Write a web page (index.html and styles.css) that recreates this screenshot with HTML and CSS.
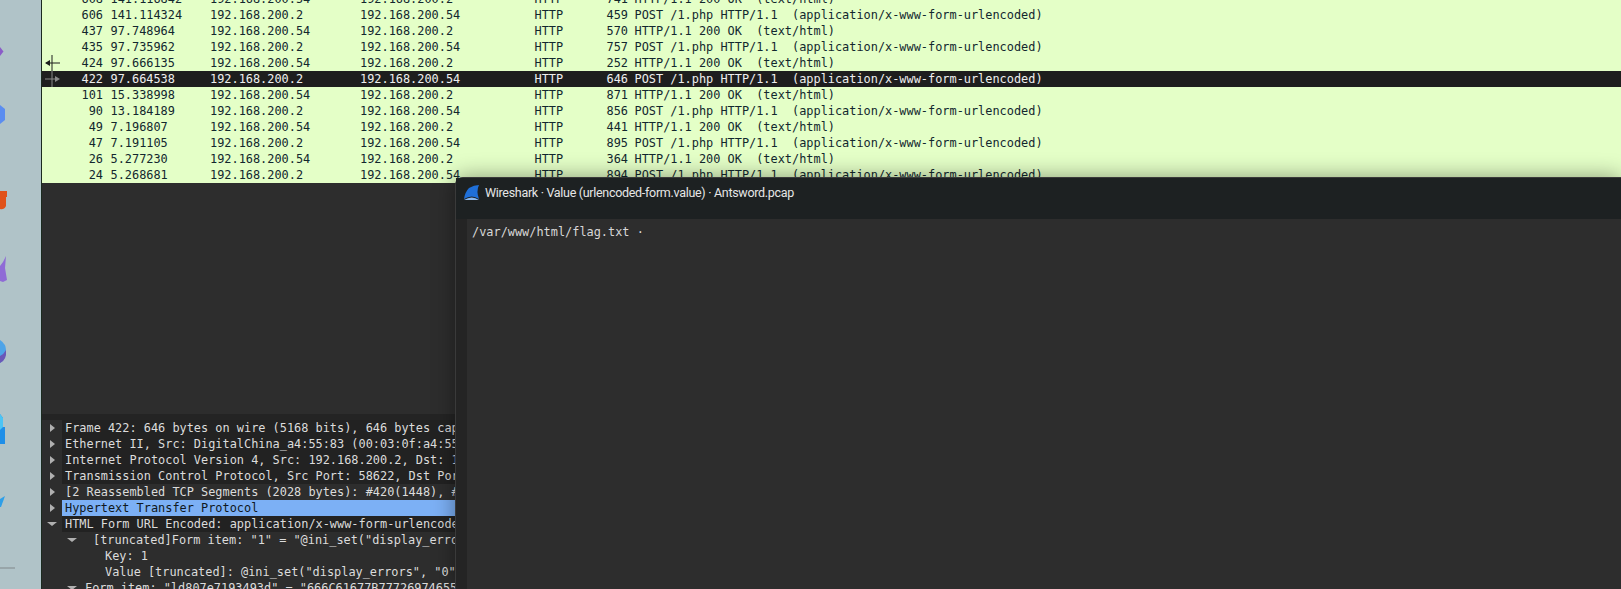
FILE: index.html
```html
<!DOCTYPE html>
<html lang="en">
<head>
<meta charset="utf-8">
<title>Wireshark</title>
<link rel="stylesheet" href="styles.css">
</head>
<body>
<div class="desktop">
  <aside class="dock">
    <svg class="dock-icons" width="41" height="589" viewBox="0 0 41 589">
      <path d="M0 47 L3.5 51.5 L0 56 Z" fill="#8a5cc8"/>
      <path d="M0 105 L5 109 L5 120 L0 124 Z" fill="#5b8df0"/>
      <path d="M0 191 H7 V197 H6 V206 Q4 210 0 209 Z" fill="#e0521a"/>
      <path d="M0 266 L3 262 L6 256 L5 268 L7 280 L3 282 L0 281 Z" fill="#8f6bd6"/>
      <path d="M0 340 Q6 344 6 350 Q6 360 0 363 Z" fill="#4ea4e8"/>
      <path d="M0 356 Q4 354 6 350 Q7 360 0 363 Z" fill="#6a58b8"/>
      <path d="M0 414 L3 418 V427 H5 V444 H0 Z" fill="#1f8fe8"/>
      <path d="M0 414 L3 418 V427 L0 430 Z" fill="#4cc4f4"/>
      <path d="M0 499 L5 496 L1 507 L0 507 Z" fill="#2f9fe8"/>
      <rect x="0" y="567" width="15" height="2" fill="#98a5a9"/>
    </svg>
  </aside>
  <main class="app">
    <section class="packets">
      <div class="row"><span class="c-no">608</span><span class="c-time">141.116842</span><span class="c-src">192.168.200.54</span><span class="c-dst">192.168.200.2</span><span class="c-proto">HTTP</span><span class="c-len">741</span><span class="c-info">HTTP/1.1 200 OK  (text/html)</span></div>
      <div class="row"><span class="c-no">606</span><span class="c-time">141.114324</span><span class="c-src">192.168.200.2</span><span class="c-dst">192.168.200.54</span><span class="c-proto">HTTP</span><span class="c-len">459</span><span class="c-info">POST /1.php HTTP/1.1  (application/x-www-form-urlencoded)</span></div>
      <div class="row"><span class="c-no">437</span><span class="c-time">97.748964</span><span class="c-src">192.168.200.54</span><span class="c-dst">192.168.200.2</span><span class="c-proto">HTTP</span><span class="c-len">570</span><span class="c-info">HTTP/1.1 200 OK  (text/html)</span></div>
      <div class="row"><span class="c-no">435</span><span class="c-time">97.735962</span><span class="c-src">192.168.200.2</span><span class="c-dst">192.168.200.54</span><span class="c-proto">HTTP</span><span class="c-len">757</span><span class="c-info">POST /1.php HTTP/1.1  (application/x-www-form-urlencoded)</span></div>
      <div class="row"><span class="c-no">424</span><span class="c-time">97.666135</span><span class="c-src">192.168.200.54</span><span class="c-dst">192.168.200.2</span><span class="c-proto">HTTP</span><span class="c-len">252</span><span class="c-info">HTTP/1.1 200 OK  (text/html)</span>
        <svg class="rel" width="16" height="16" viewBox="0 0 16 16"><path d="M8 0V16M2 8H16" stroke="#1c1f1c" fill="none"/><path d="M1 8L6 5V11Z" fill="#1c1f1c"/></svg></div>
      <div class="row selected"><span class="c-no">422</span><span class="c-time">97.664538</span><span class="c-src">192.168.200.2</span><span class="c-dst">192.168.200.54</span><span class="c-proto">HTTP</span><span class="c-len">646</span><span class="c-info">POST /1.php HTTP/1.1  (application/x-www-form-urlencoded)</span>
        <svg class="rel" width="16" height="16" viewBox="0 0 16 16"><path d="M8 0V16M1 8H13" stroke="#8a8a8a" fill="none"/><path d="M16 8L11 5V11Z" fill="#8a8a8a"/></svg></div>
      <div class="row"><span class="c-no">101</span><span class="c-time">15.338998</span><span class="c-src">192.168.200.54</span><span class="c-dst">192.168.200.2</span><span class="c-proto">HTTP</span><span class="c-len">871</span><span class="c-info">HTTP/1.1 200 OK  (text/html)</span></div>
      <div class="row"><span class="c-no">90</span><span class="c-time">13.184189</span><span class="c-src">192.168.200.2</span><span class="c-dst">192.168.200.54</span><span class="c-proto">HTTP</span><span class="c-len">856</span><span class="c-info">POST /1.php HTTP/1.1  (application/x-www-form-urlencoded)</span></div>
      <div class="row"><span class="c-no">49</span><span class="c-time">7.196807</span><span class="c-src">192.168.200.54</span><span class="c-dst">192.168.200.2</span><span class="c-proto">HTTP</span><span class="c-len">441</span><span class="c-info">HTTP/1.1 200 OK  (text/html)</span></div>
      <div class="row"><span class="c-no">47</span><span class="c-time">7.191105</span><span class="c-src">192.168.200.2</span><span class="c-dst">192.168.200.54</span><span class="c-proto">HTTP</span><span class="c-len">895</span><span class="c-info">POST /1.php HTTP/1.1  (application/x-www-form-urlencoded)</span></div>
      <div class="row"><span class="c-no">26</span><span class="c-time">5.277230</span><span class="c-src">192.168.200.54</span><span class="c-dst">192.168.200.2</span><span class="c-proto">HTTP</span><span class="c-len">364</span><span class="c-info">HTTP/1.1 200 OK  (text/html)</span></div>
      <div class="row"><span class="c-no">24</span><span class="c-time">5.268681</span><span class="c-src">192.168.200.2</span><span class="c-dst">192.168.200.54</span><span class="c-proto">HTTP</span><span class="c-len">894</span><span class="c-info">POST /1.php HTTP/1.1  (application/x-www-form-urlencoded)</span></div>
    </section>
    <div class="gap"></div>
    <section class="details">
      <div class="tree closed"><i class="tw"></i><span class="label dark">Frame 422: 646 bytes on wire (5168 bits), 646 bytes captured (5168 bits) on interface</span></div>
      <div class="tree closed"><i class="tw"></i><span class="label dark">Ethernet II, Src: DigitalChina_a4:55:83 (00:03:0f:a4:55:83), Dst: fa:16:3e:00:00:00</span></div>
      <div class="tree closed"><i class="tw"></i><span class="label dark">Internet Protocol Version 4, Src: 192.168.200.2, Dst: 192.168.200.54</span></div>
      <div class="tree closed"><i class="tw"></i><span class="label dark">Transmission Control Protocol, Src Port: 58622, Dst Port: 80, Seq: 1449, Ack: 1</span></div>
      <div class="tree closed"><i class="tw"></i><span class="label">[2 Reassembled TCP Segments (2028 bytes): #420(1448), #422(580)]</span></div>
      <div class="tree closed hl"><i class="tw"></i><span class="label">Hypertext Transfer Protocol</span></div>
      <div class="tree open"><i class="tw"></i><span class="label dark">HTML Form URL Encoded: application/x-www-form-urlencoded</span></div>
      <div class="tree open lvl1"><i class="tw"></i><span class="label">[truncated]Form item: "1" = "@ini_set("display_errors", "0")</span></div>
      <div class="tree lvl2"><span class="label">Key: 1</span></div>
      <div class="tree lvl2"><span class="label">Value [truncated]: @ini_set("display_errors", "0");@set_time_limit(0)</span></div>
      <div class="tree open lvl1b"><i class="tw"></i><span class="label">Form item: "ld807e7193493d" = "666C61677B77726974655"</span></div>
    </section>
  </main>
  <section class="dialog">
    <header class="titlebar">
      <svg class="fin" width="16" height="16" viewBox="0 0 16 16"><path d="M0 14 Q1 7 5 3 Q10 0 15 0 Q12 6 15 14 Q8 9 0 14 Z" fill="#1f6fd8"/><path d="M0 15 Q8 10 15 15 Z" fill="#8ab8ee"/></svg>
      <span class="title">Wireshark · Value (urlencoded-form.value) · Antsword.pcap</span>
    </header>
    <div class="content">
      <div class="textarea">/var/www/html/flag.txt ·</div>
    </div>
  </section>
</div>
</body>
</html>
```
FILE: styles.css
```css
* { box-sizing: border-box; }
html, body { margin: 0; padding: 0; height: 100%; overflow: hidden; }
.desktop {
  position: relative;
  display: flex;
  width: 1621px;
  height: 589px;
  overflow: hidden;
  background: #b0c3c8;
}
.dock { width: 41px; flex: none; }
.dock-icons { display: block; }
.app {
  flex: 1;
  min-width: 0;
  display: flex;
  flex-direction: column;
  background: #2d2d2d;
  border-left: 1px solid #1b2a1f;
  font-family: "DejaVu Sans Mono", monospace;
  font-size: 11.9px;
}
.packets {
  height: 183px;
  flex: none;
  display: flex;
  flex-direction: column;
  justify-content: flex-end;
  overflow: hidden;
  background: #e4ffc7;
  color: #12272e;
}
.row {
  position: relative;
  flex: none;
  display: flex;
  height: 16px;
  line-height: 16px;
  white-space: pre;
}
.row.selected { background: #1e1e1e; color: #eee; }
.rel { position: absolute; left: 2px; top: 0; }
.c-no { width: 61px; text-align: right; }
.c-time { width: 107px; padding-left: 7.5px; }
.c-src { width: 150px; }
.c-dst { width: 174.5px; }
.c-proto { width: 72px; }
.c-len { width: 28px; }
.c-info { flex: none; }
.gap { height: 237px; flex: none; border-bottom: 6px solid #242424; }
.details { flex: 1; color: #dcdcdc; overflow: hidden; }
.tree {
  display: flex;
  align-items: center;
  height: 16px;
  line-height: 16px;
  padding-left: 20px;
  white-space: pre;
  position: relative;
}
.label { flex: 1; padding-left: 3px; }
.label.dark { background: #222; }
.tree.hl { background: #7cb0f5; color: #101820; margin-left: 20px; padding-left: 0; }
.tree.hl .tw { left: -12px; }
.tw { position: absolute; left: 8px; top: 4px; width: 0; height: 0; }
.closed .tw { border-left: 5px solid #b0b0b0; border-top: 4px solid transparent; border-bottom: 4px solid transparent; }
.open .tw { top: 6px; left: 5px; border-top: 4px solid #b0b0b0; border-left: 5px solid transparent; border-right: 5px solid transparent; }
.lvl1 { padding-left: 48px; }
.lvl1 .tw { left: 25px; }
.lvl2 { padding-left: 60px; }
.lvl1b { padding-left: 40px; }
.lvl1b .tw { left: 25px; }
.dialog {
  position: absolute;
  left: 455px;
  top: 177px;
  right: 0;
  bottom: 0;
  display: flex;
  flex-direction: column;
  background: #242424;
  border-left: 1px solid #3a3a3a;
  border-top: 1px solid #3a3a3a;
  border-top-left-radius: 8px;
  box-shadow: 0 0 22px rgba(0,0,0,.4);
}
.titlebar {
  flex: none;
  height: 41px;
  display: flex;
  align-items: center;
  gap: 5px;
  padding-left: 8px;
  padding-bottom: 12px;
  background: #1d2122;
  color: #e6e6e6;
  font-family: "Roboto", sans-serif;
  font-size: 12.5px;
  letter-spacing: -0.3px;
}
.fin { flex: none; }
.content { flex: 1; padding-left: 11px; background: #242424; }
.textarea {
  height: 100%;
  padding: 5px;
  font-family: "DejaVu Sans Mono", monospace;
  font-size: 11.9px;
  line-height: 16px;
  color: #d8d8d8;
  background: #2d2d2d;
}
```
